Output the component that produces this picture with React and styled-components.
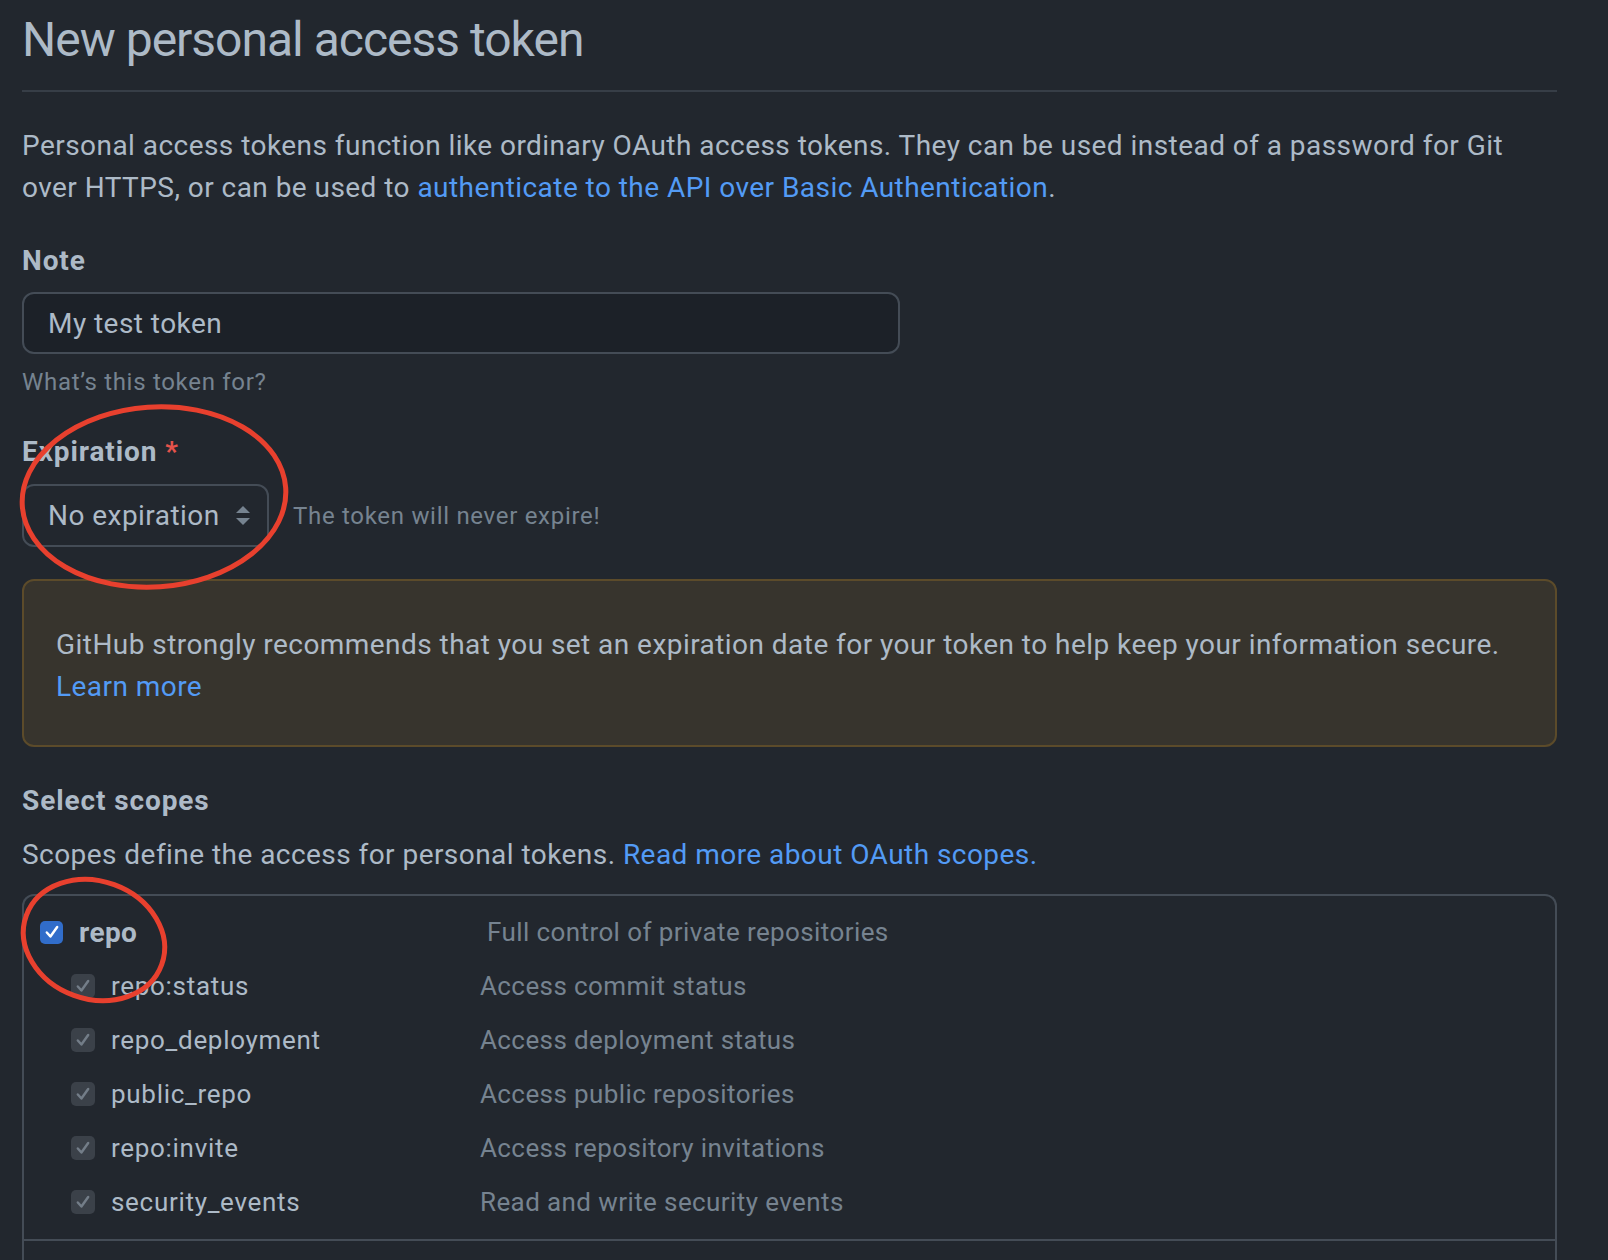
import styled, { createGlobalStyle } from "styled-components";

const GlobalStyle = createGlobalStyle`
  body {
    margin: 0;
    background-color: #22272e;
    font-family: Roboto, "Liberation Sans", sans-serif;
    color: #adbac7;
  }
`;

const StyledPage = styled.div`
  position: relative;
  width: 1535px;
  padding: 10px 0 0 22px;
  letter-spacing: 0.45px;
`;

const StyledTitle = styled.h1`
  margin: 0;
  font-size: 48px;
  font-weight: 400;
  line-height: 60px;
  letter-spacing: -1px;
  color: #adbac7;
  padding-bottom: 20px;
  border-bottom: 2px solid #373e47;
`;

const StyledIntro = styled.p`
  margin: 33px 0 0;
  font-size: 28px;
  line-height: 42px;
`;

const StyledLink = styled.a`
  color: #539bf5;
  text-decoration: none;
`;

const StyledFormGroup = styled.div`
  margin-top: ${(props) => props.$gap || 30}px;
`;

const StyledLabel = styled.div`
  padding-top: 2px;
  font-size: 28px;
  font-weight: 700;
  line-height: 42px;
  letter-spacing: 0.9px;
`;

const StyledRequired = styled.span`
  color: #e5534b;
  margin-left: 8px;
`;

const StyledInput = styled.div`
  margin-top: 10px;
  box-sizing: border-box;
  width: 878px;
  height: 62px;
  border: 2px solid #444c56;
  border-radius: 12px;
  background-color: #1c2128;
  padding: 0 24px;
  display: flex;
  align-items: center;
  font-size: 28px;
`;

const StyledNote = styled.div`
  margin-top: 10px;
  font-size: 24px;
  line-height: 36px;
  letter-spacing: 0.7px;
  color: #768390;
`;

const StyledSelectRow = styled.div`
  margin-top: 11px;
  display: flex;
  align-items: center;
  gap: 24px;
`;

const StyledSelect = styled.div`
  box-sizing: border-box;
  width: 247px;
  height: 63px;
  border: 2px solid #444c56;
  border-radius: 12px;
  background-color: #22272e;
  padding: 0 16px 0 24px;
  display: flex;
  align-items: center;
  justify-content: space-between;
  font-size: 28px;
`;

const StyledHint = styled.span`
  font-size: 24px;
  letter-spacing: 0.7px;
  color: #768390;
`;

const StyledFlash = styled.div`
  margin-top: 32px;
  box-sizing: border-box;
  width: 100%;
  padding: 43px 32px 37px;
  border: 2px solid #5c4b2a;
  border-radius: 12px;
  background-color: #37342d;
  font-size: 28px;
  line-height: 42px;
`;

const StyledScopesText = styled.p`
  margin: 12px 0 0;
  font-size: 28px;
  line-height: 42px;
`;

const StyledScopesBox = styled.div`
  margin-top: 18px;
  border: 2px solid #444c56;
  border-bottom: none;
  border-radius: 12px 12px 0 0;
  height: 420px;
  overflow: hidden;
`;

const StyledGroup = styled.ul`
  list-style: none;
  margin: 0;
  padding: 9px 0 10px;
  border-bottom: 2px solid #444c56;
`;

const StyledScopeRow = styled.li`
  height: 54px;
  display: flex;
  align-items: center;
  padding-left: ${(props) => props.$indent}px;
`;

const StyledScopeName = styled.label`
  width: ${(props) => props.$width}px;
  display: flex;
  align-items: center;
  gap: 16px;
  font-size: ${(props) => (props.$parent ? 28 : 26)}px;
  font-weight: ${(props) => (props.$parent ? 700 : 400)};
  letter-spacing: ${(props) => (props.$parent ? 0.4 : 0.7)}px;
`;

const StyledCheckbox = styled.span`
  width: ${(props) => (props.$disabled ? 24 : 23)}px;
  height: ${(props) => (props.$disabled ? 24 : 23)}px;
  flex-shrink: 0;
  border-radius: 5px;
  background-color: ${(props) => (props.$disabled ? "#3b4149" : "#316dca")};
  display: inline-flex;
  align-items: center;
  justify-content: center;
`;

const StyledDescription = styled.span`
  font-size: 26px;
  letter-spacing: 0.4px;
  color: #768390;
`;

const StyledOverlay = styled.svg`
  position: absolute;
  left: 0;
  top: 0;
  pointer-events: none;
`;

function Checkbox({ disabled }) {
  return (
    <StyledCheckbox $disabled={disabled}>
      <svg width="18" height="18" viewBox="0 0 16 16">
        <path
          d="M3.4 8.4 L6.6 12 L12.6 3.6"
          fill="none"
          stroke={disabled ? "#737d88" : "#ffffff"}
          strokeWidth="2.2"
          strokeLinecap="round"
          strokeLinejoin="round"
        />
      </svg>
    </StyledCheckbox>
  );
}

function SelectArrows() {
  return (
    <svg width="16" height="22" viewBox="0 0 16 22">
      <path d="M1 8 L8 1 L15 8 Z" fill="#768390" />
      <path d="M1 13 L15 13 L8 20 Z" fill="#768390" />
    </svg>
  );
}

function ScopeRow({ name, description, parent }) {
  return (
    <StyledScopeRow $indent={parent ? 16 : 47}>
      <StyledScopeName $parent={parent} $width={parent ? 447 : 409}>
        <Checkbox disabled={!parent} />
        {name}
      </StyledScopeName>
      <StyledDescription>{description}</StyledDescription>
    </StyledScopeRow>
  );
}

const repoScopes = [
  ["repo:status", "Access commit status"],
  ["repo_deployment", "Access deployment status"],
  ["public_repo", "Access public repositories"],
  ["repo:invite", "Access repository invitations"],
  ["security_events", "Read and write security events"],
];

function App() {
  return (
    <StyledPage>
      <GlobalStyle />
      <StyledTitle>New personal access token</StyledTitle>
      <StyledIntro>
        Personal access tokens function like ordinary OAuth access tokens. They can be used instead of a
        password for Git over HTTPS, or can be used to{" "}
        <StyledLink href="#">authenticate to the API over Basic Authentication</StyledLink>.
      </StyledIntro>

      <StyledFormGroup $gap={29}>
        <StyledLabel>Note</StyledLabel>
        <StyledInput>My test token</StyledInput>
        <StyledNote>What’s this token for?</StyledNote>
      </StyledFormGroup>

      <StyledFormGroup $gap={29}>
        <StyledLabel>
          Expiration<StyledRequired>*</StyledRequired>
        </StyledLabel>
        <StyledSelectRow>
          <StyledSelect>
            No expiration
            <SelectArrows />
          </StyledSelect>
          <StyledHint>The token will never expire!</StyledHint>
        </StyledSelectRow>
      </StyledFormGroup>

      <StyledFlash>
        GitHub strongly recommends that you set an expiration date for your token to help keep your
        information secure.
        <br />
        <StyledLink href="#">Learn more</StyledLink>
      </StyledFlash>

      <StyledFormGroup $gap={31}>
        <StyledLabel>Select scopes</StyledLabel>
        <StyledScopesText>
          Scopes define the access for personal tokens.{" "}
          <StyledLink href="#">Read more about OAuth scopes.</StyledLink>
        </StyledScopesText>
        <StyledScopesBox>
          <StyledGroup>
            <ScopeRow parent name="repo" description="Full control of private repositories" />
            {repoScopes.map(([name, description]) => (
              <ScopeRow key={name} name={name} description={description} />
            ))}
          </StyledGroup>
        </StyledScopesBox>
      </StyledFormGroup>

      {/* red annotation rings drawn over the screenshot */}
      <StyledOverlay width="1608" height="1260" viewBox="0 0 1608 1260">
        <ellipse
          cx="154"
          cy="497"
          rx="132"
          ry="90"
          transform="rotate(-4 154 497)"
          fill="none"
          stroke="#e8402e"
          strokeWidth="5"
        />
        <ellipse
          cx="94"
          cy="940"
          rx="72"
          ry="59"
          transform="rotate(20 94 940)"
          fill="none"
          stroke="#e8402e"
          strokeWidth="5"
        />
      </StyledOverlay>
    </StyledPage>
  );
}

export default App;
